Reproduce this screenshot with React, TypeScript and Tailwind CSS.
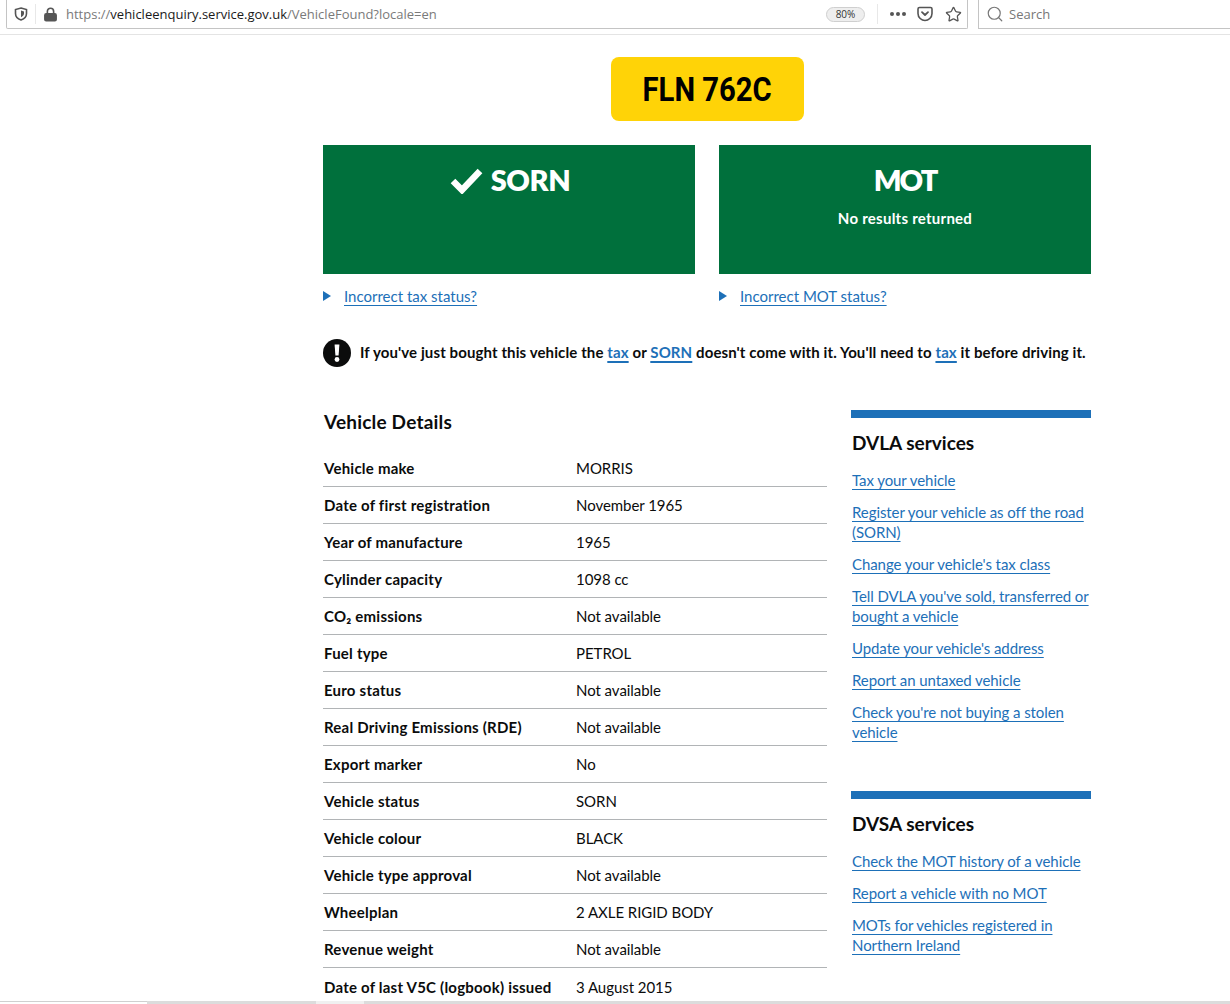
import React from "react";
import { Lock, Search, Star } from "lucide-react";

const details = [
  ["Vehicle make", "MORRIS"],
  ["Date of first registration", "November 1965"],
  ["Year of manufacture", "1965"],
  ["Cylinder capacity", "1098 cc"],
  ["CO₂ emissions", "Not available"],
  ["Fuel type", "PETROL"],
  ["Euro status", "Not available"],
  ["Real Driving Emissions (RDE)", "Not available"],
  ["Export marker", "No"],
  ["Vehicle status", "SORN"],
  ["Vehicle colour", "BLACK"],
  ["Vehicle type approval", "Not available"],
  ["Wheelplan", "2 AXLE RIGID BODY"],
  ["Revenue weight", "Not available"],
  ["Date of last V5C (logbook) issued", "3 August 2015"],
];

const dvla = [
  "Tax your vehicle",
  "Register your vehicle as off the road (SORN)",
  "Change your vehicle's tax class",
  "Tell DVLA you've sold, transferred or bought a vehicle",
  "Update your vehicle's address",
  "Report an untaxed vehicle",
  "Check you're not buying a stolen vehicle",
];

const dvsa = [
  "Check the MOT history of a vehicle",
  "Report a vehicle with no MOT",
  "MOTs for vehicles registered in Northern Ireland",
];

const linkClass = "text-[#1d70b8] underline decoration-1 underline-offset-[3px]";
const noticeLink = "text-[#1d70b8] underline decoration-2 underline-offset-[3px]";

function BrowserBar() {
  return (
    <div className="flex h-[35px] shrink-0 border-b border-[#e4e4e4] bg-white font-['Open_Sans',sans-serif]">
      <div className="ml-[6px] flex h-[29px] w-[962px] items-center rounded-b-[2px] border-x border-b border-[#c4c4c4]">
        <svg width="14" height="14" viewBox="0 0 14 14" className="ml-[7px]">
          <path d="M7 1 L12.5 2.6 V6.5 C12.5 9.8 10 12 7 13 C4 12 1.5 9.8 1.5 6.5 V2.6 Z" fill="none" stroke="#555" strokeWidth="1.6" />
          <path d="M7 3.6 L10 4.5 V6.6 C10 8.4 8.6 9.6 7 10.3 Z" fill="#555" />
        </svg>
        <div className="ml-[7px] h-[20px] w-px bg-[#e8e8e8]" />
        <Lock size={15} strokeWidth={2.6} className="ml-[7px] text-[#555] [&>rect]:fill-[#555]" />
        <div className="ml-[8px] pt-[2px] text-[13px] text-[#7a7a7a]">
          https://<span className="text-[#1a1a1a]">vehicleenquiry.service.gov.uk</span>/VehicleFound?locale=en
        </div>
        <div className="ml-auto flex h-[15px] w-[39px] items-center justify-center rounded-full border border-[#cfcfcf] bg-[#eeeeee] text-[10px] text-[#333]">
          80%
        </div>
        <div className="ml-[12px] h-[20px] w-px bg-[#e8e8e8]" />
        <div className="ml-[12px] flex gap-[2px]">
          <span className="size-[4px] rounded-full bg-[#555]" />
          <span className="size-[4px] rounded-full bg-[#555]" />
          <span className="size-[4px] rounded-full bg-[#555]" />
        </div>
        <svg width="16" height="16" viewBox="0 0 16 16" className="ml-[11px]">
          <path d="M2.5 1.5 H13.5 Q15 1.5 15 3 V7.5 C15 11.5 11.5 14.5 8 14.5 C4.5 14.5 1 11.5 1 7.5 V3 Q1 1.5 2.5 1.5 Z" fill="none" stroke="#555" strokeWidth="1.6" />
          <path d="M5 6.2 L8 9 L11 6.2" fill="none" stroke="#555" strokeWidth="1.8" strokeLinecap="round" strokeLinejoin="round" />
        </svg>
        <Star size={17} strokeWidth={1.8} className="ml-[12px] mr-[5px] text-[#555]" />
      </div>
      <div className="ml-[10px] flex h-[29px] flex-1 items-center border-b border-l border-[#c4c4c4]">
        <Search size={18} strokeWidth={1.6} className="ml-[7px] text-[#777]" />
        <span className="ml-[5px] pt-[2px] text-[13px] text-[#777]">Search</span>
      </div>
    </div>
  );
}

function StatusBox({ title, tick, note }: { title: string; tick?: boolean; note?: string }) {
  return (
    <div className="flex h-[129px] w-[372px] flex-col items-center bg-[#00703c] pt-[15px] text-white">
      <div className={`flex h-[40px] items-center text-[29px] font-extrabold ${tick ? "tracking-[-0.4px]" : "tracking-[-2px]"}`}>
        {tick && (
          <svg width="33" height="27" viewBox="0 0 33 27" className="mr-[8px] ml-[2px]">
            <path d="M3 14 L12 23 L30 4" fill="none" stroke="white" strokeWidth="6.5" />
          </svg>
        )}
        {title}
      </div>
      {note && <div className="mt-[7px] text-[15px] font-bold tracking-[0.25px]">{note}</div>}
    </div>
  );
}

function Disclosure({ label }: { label: string }) {
  return (
    <div className="flex w-[372px] items-center text-[15px]">
      <span className="h-0 w-0 border-y-[5px] border-l-[8px] border-y-transparent border-l-[#1d70b8]" />
      <a className={`ml-[13px] ${linkClass}`}>{label}</a>
    </div>
  );
}

function ServiceList({ title, links }: { title: string; links: string[] }) {
  return (
    <div className="border-t-[8px] border-[#1d70b8]">
      <h2 className="mt-[12px] pl-px text-[19px] leading-[26px] font-bold text-[#0b0c0c]">{title}</h2>
      <ul className="mt-[14px] flex flex-col gap-[12px] pl-px text-[15px] leading-[20px] tracking-[-0.08px]">
        {links.map((l) => (
          <li key={l}>
            <a className={linkClass}>{l}</a>
          </li>
        ))}
      </ul>
    </div>
  );
}

export default function App() {
  return (
    <div className="flex h-[1004px] flex-col overflow-hidden bg-white font-['Lato',sans-serif] text-[#0b0c0c]">
      <BrowserBar />
      <div className="min-h-0 flex-1 overflow-hidden">
        <div className="ml-[323px] w-[768px]">
          <div className="mt-[22px] flex justify-center">
            <div className="ml-[1px] flex h-[64px] w-[193px] items-center justify-center rounded-[8px] bg-[#ffd307] font-['Roboto',sans-serif] text-[34px] font-bold text-black">
              <span className="inline-block scale-x-[0.86] whitespace-nowrap">FLN 762C</span>
            </div>
          </div>
          <div className="mt-[24px] flex justify-between">
            <StatusBox title="SORN" tick />
            <StatusBox title="MOT" note="No results returned" />
          </div>
          <div className="mt-[11px] flex justify-between">
            <Disclosure label="Incorrect tax status?" />
            <Disclosure label="Incorrect MOT status?" />
          </div>
          <div className="mt-[31px] flex items-center whitespace-nowrap text-[15px] font-bold tracking-[0.11px]">
            <svg width="28" height="28" viewBox="0 0 28 28">
              <circle cx="14" cy="14" r="14" fill="#0b0c0c" />
              <path d="M11.6 5.5 H16.4 L15.6 16.5 H12.4 Z" fill="white" />
              <circle cx="14" cy="20.5" r="2.4" fill="white" />
            </svg>
            <p className="ml-[9px]">
              If you've just bought this vehicle the <a className={noticeLink}>tax</a> or <a className={noticeLink}>SORN</a>{" "}
              doesn't come with it. You'll need to <a className={noticeLink}>tax</a> it before driving it.
            </p>
          </div>
          <div className="mt-[42px] flex justify-between">
            <div className="w-[504px]">
              <h2 className="pl-px text-[19px] leading-[26px] font-bold tracking-[0.2px]">Vehicle Details</h2>
              <div className="mt-[15px]">
                {details.map(([k, v]) => (
                  <div key={k} className="flex h-[37px] items-center border-b border-[#b1b4b6] pt-[2px] text-[15px] whitespace-nowrap last:border-b-0">
                    <div className="w-[253px] pl-px font-bold tracking-[0.22px]">{k}</div>
                    <div className="tracking-[-0.05px]">{v}</div>
                  </div>
                ))}
              </div>
            </div>
            <div className="mt-px w-[240px]">
              <ServiceList title="DVLA services" links={dvla} />
              <div className="mt-[49px]">
                <ServiceList title="DVSA services" links={dvsa} />
              </div>
            </div>
          </div>
        </div>
      </div>
      <div className="flex h-[3px] shrink-0">
        <div className="h-px w-[147px] bg-[#d0d0d0]" />
        <div className="w-[169px] bg-[#dcdcdc]" />
        <div className="w-[48px] bg-[#f0f0f0]" />
        <div className="flex-1 bg-[#dcdcdc]" />
      </div>
    </div>
  );
}
